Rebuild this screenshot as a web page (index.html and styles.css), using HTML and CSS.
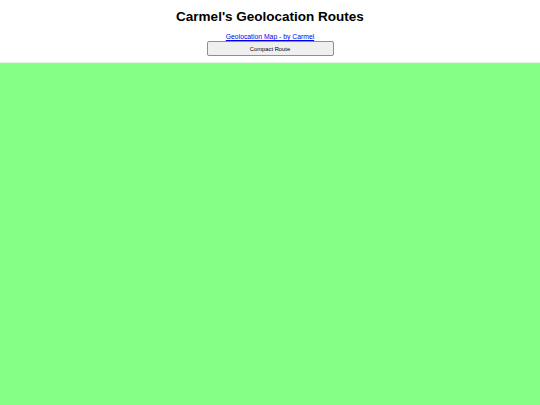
FILE: index.html
```html
<!DOCTYPE html>
<html>
<head>
<meta charset="utf-8">
<link rel="stylesheet" href="styles.css">
</head>
<body>
<div class="page">
  <header class="header">
    <h1 class="title">Carmel's Geolocation Routes</h1>
    <a class="link" href="#">Geolocation Map - by Carmel</a>
    <button class="btn">Compact Route</button>
  </header>
  <div class="map"></div>
</div>
</body>
</html>
```
FILE: styles.css
```css
html, body { margin: 0; padding: 0; height: 100%; }
body { font-family: "Liberation Sans", Arial, sans-serif; background: #fff; }
.page { display: flex; flex-direction: column; height: 100%; }
.header { display: flex; flex-direction: column; align-items: center; padding-top: 9px; }
.title { font-size: 13.5px; font-weight: bold; margin: 0 0 8px 0; line-height: 16px; color: #000; }
.link { font-size: 6.8px; color: #0000ee; line-height: 8px; }
.btn {
  width: 127px; height: 15px; padding: 0; margin-top: 0;
  font-family: "Liberation Sans", Arial, sans-serif; font-size: 5.8px; color: #000;
  background: #efefef; border: 1px solid #8f8f8f; border-radius: 2px;
}
.map { margin-top: 6px; flex: 1; background: #86ff86; border-top: 1px solid #e4f7e4; }
```
